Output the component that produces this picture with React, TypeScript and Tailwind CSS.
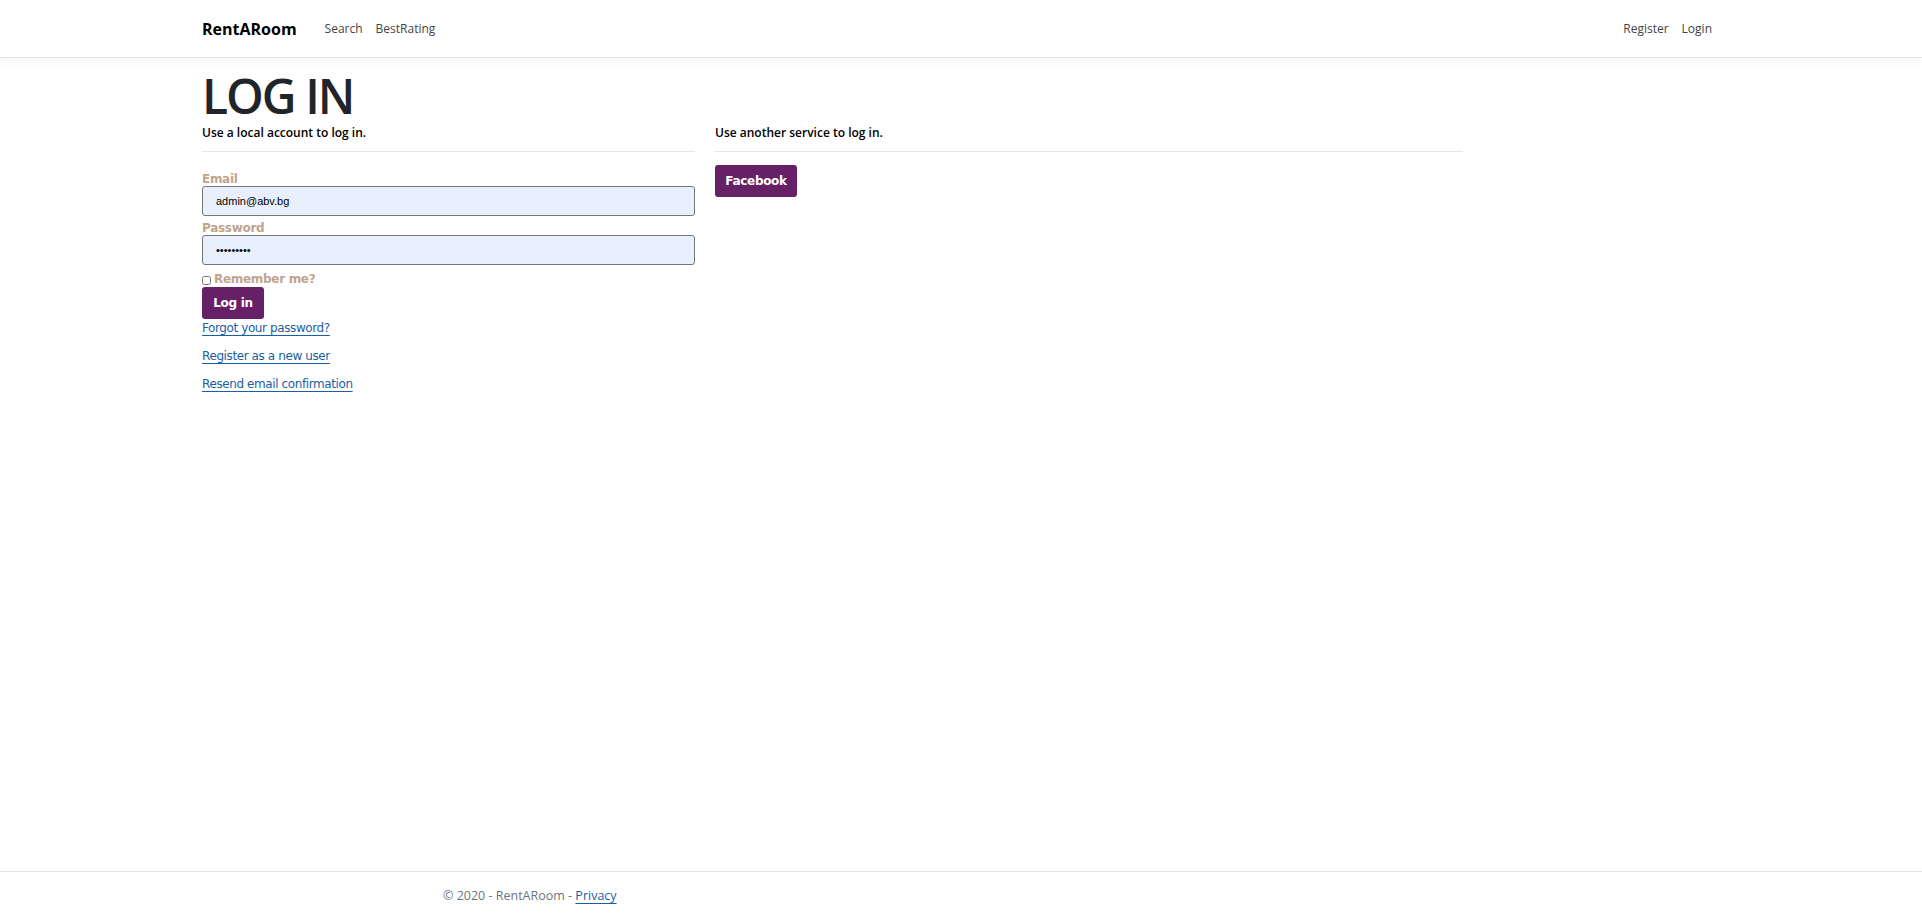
import { useState } from "react";

export default function App() {
  const [email, setEmail] = useState("admin@abv.bg");
  const [password, setPassword] = useState("password1");
  const [remember, setRemember] = useState(false);

  return (
    <div className="min-h-[920px] w-full bg-white flex flex-col font-['Open_Sans',sans-serif] text-[#212529]">
      {/* Navbar */}
      <header className="h-[58px] border-b border-[#e5e5e5] shadow-[0_4px_10px_rgba(0,0,0,0.04)] bg-white">
        <nav className="h-full pl-[202px] pr-[210px] flex items-center justify-between">
          <div className="flex items-center">
            <a href="#" className="text-[16px] font-bold text-black mr-[28px]">RentARoom</a>
            <a href="#" className="text-[12px] text-[#444] mr-[13px]">Search</a>
            <a href="#" className="text-[12px] text-[#444]">BestRating</a>
          </div>
          <div className="flex items-center gap-[13px]">
            <a href="#" className="text-[12px] text-[#444]">Register</a>
            <a href="#" className="text-[12px] text-[#444]">Login</a>
          </div>
        </nav>
      </header>

      {/* Main */}
      <main className="flex-1 pl-[202px]">
        <h1 className="text-[48px] leading-[48px] font-semibold tracking-[-2px] mt-[14px] text-[#212529]">LOG IN</h1>
        <div className="flex mt-[4px]">
          {/* Local account */}
          <section className="w-[493px]">
            <h4 className="text-[12px] font-semibold leading-[18px] text-black">Use a local account to log in.</h4>
            <hr className="mt-[9px] border-0 border-t border-[#e6e6e6]" />
            <form className="mt-[20px] flex flex-col" onSubmit={(e) => e.preventDefault()}>
              <label className="text-[12px] font-bold leading-[14px] text-[#c0a48c] font-['DejaVu_Sans',sans-serif] tracking-[-0.3px]">Email</label>
              <input
                value={email}
                onChange={(e) => setEmail(e.target.value)}
                className="h-[30px] bg-[#e8f0fe] border border-[#767676] rounded-[3px] px-[13px] text-[11px] text-black font-['Liberation_Sans',sans-serif] outline-none"
              />
              <label className="mt-[5px] text-[12px] font-bold leading-[14px] text-[#c0a48c] font-['DejaVu_Sans',sans-serif] tracking-[-0.3px]">Password</label>
              <input
                type="password"
                value={password}
                onChange={(e) => setPassword(e.target.value)}
                className="h-[30px] bg-[#e8f0fe] border border-[#767676] rounded-[3px] px-[13px] text-[11px] text-black font-['Liberation_Sans',sans-serif] outline-none"
              />
              <label className="mt-[6px] flex items-center gap-[3px] text-[12px] font-bold leading-[16px] text-[#c0a48c] font-['DejaVu_Sans',sans-serif] tracking-[-0.3px]">
                <input
                  type="checkbox"
                  checked={remember}
                  onChange={(e) => setRemember(e.target.checked)}
                  className="w-[9px] h-[9px] m-0 mt-[3px]"
                />
                Remember me?
              </label>
              <button
                type="submit"
                className="self-start w-[62px] h-[32px] rounded-[3px] bg-[#662066] text-white text-[12px] font-bold font-['DejaVu_Sans',sans-serif] tracking-[-0.3px]"
              >
                Log in
              </button>
              <div className="flex flex-col items-start gap-[9px] text-[12px] font-['DejaVu_Sans',sans-serif] tracking-[-0.4px] text-[#1b5ea3]">
                <a href="#" className="underline underline-offset-[3px] decoration-[#1b5ea3] leading-[19px]">Forgot your password?</a>
                <a href="#" className="underline underline-offset-[3px] decoration-[#1b5ea3] leading-[19px]">Register as a new user</a>
                <a href="#" className="underline underline-offset-[3px] decoration-[#1b5ea3] leading-[19px]">Resend email confirmation</a>
              </div>
            </form>
          </section>

          {/* External */}
          <section className="w-[748px] ml-[20px]">
            <h4 className="text-[12px] font-semibold leading-[18px] text-black">Use another service to log in.</h4>
            <hr className="mt-[9px] border-0 border-t border-[#e6e6e6]" />
            <button className="mt-[13px] w-[82px] h-[32px] rounded-[3px] bg-[#662066] text-white text-[12px] font-bold font-['DejaVu_Sans',sans-serif] tracking-[-0.3px]">
              Facebook
            </button>
          </section>
        </div>
      </main>

      {/* Footer */}
      <footer className="h-[49px] border-t border-[#e5e5e5] flex items-center pl-[443px] text-[12.5px] text-[#6c757d]">
        <span>© 2020 - RentARoom - <a href="#" className="text-[#1b5ea3] underline underline-offset-[3px]">Privacy</a></span>
      </footer>
    </div>
  );
}
